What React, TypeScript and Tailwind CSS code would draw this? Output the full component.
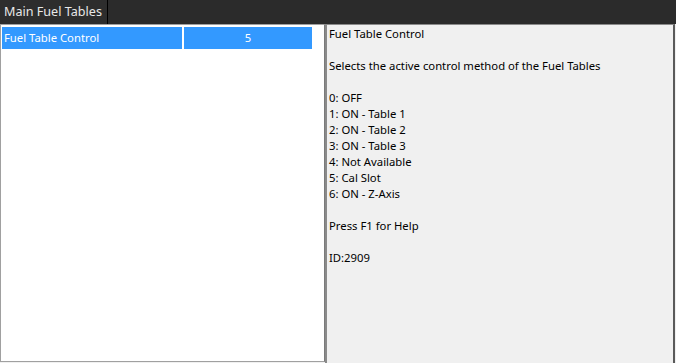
const rows = [{ name: "Fuel Table Control", value: "5" }];

const help = [
  "Fuel Table Control",
  "",
  "Selects the active control method of the Fuel Tables",
  "",
  "0: OFF",
  "1: ON - Table 1",
  "2: ON - Table 2",
  "3: ON - Table 3",
  "4: Not Available",
  "5: Cal Slot",
  "6: ON - Z-Axis",
  "",
  "Press F1 for Help",
  "",
  "ID:2909",
];

export default function App() {
  return (
    <div
      className="flex h-[363px] w-[676px] flex-col overflow-hidden bg-[#2b2b2b] text-[11.3px]"
      style={{ fontFamily: '"Noto Sans", "Open Sans", sans-serif' }}
    >
      <div className="flex h-[24px] shrink-0">
        <div className="flex h-[24px] w-[108px] items-center border-r border-black bg-[#2d2d2d] pl-[4px] text-[12.6px] text-[#e8e8e8]">
          Main Fuel Tables
        </div>
      </div>
      <div className="flex min-h-0 flex-1 bg-[#f0f0f0] pr-[1px]">
        <div className="mb-[1px] w-[325px] shrink-0 border border-[#a0a0a0] border-r-[#7a7a7a] bg-white p-[1px]">
          {rows.map((r) => (
            <div key={r.name} className="flex h-[23px] gap-[2px] pt-[1px]">
              <div className="flex w-[180px] items-center bg-[#3399ff] pl-[2px] text-white">{r.name}</div>
              <div className="flex w-[128px] items-center justify-center bg-[#3399ff] text-white">{r.value}</div>
            </div>
          ))}
        </div>
        <div className="flex-1 border-l-2 border-t border-r-2 border-[#8a8a8a] border-r-[#5a5a5a] bg-[#f0f0f0] pl-[2px] pt-[1px] text-black">
          {help.map((line, i) => (
            <div key={i} className="h-[16px] leading-[16px] whitespace-pre">
              {line || " "}
            </div>
          ))}
        </div>
      </div>
    </div>
  );
}
